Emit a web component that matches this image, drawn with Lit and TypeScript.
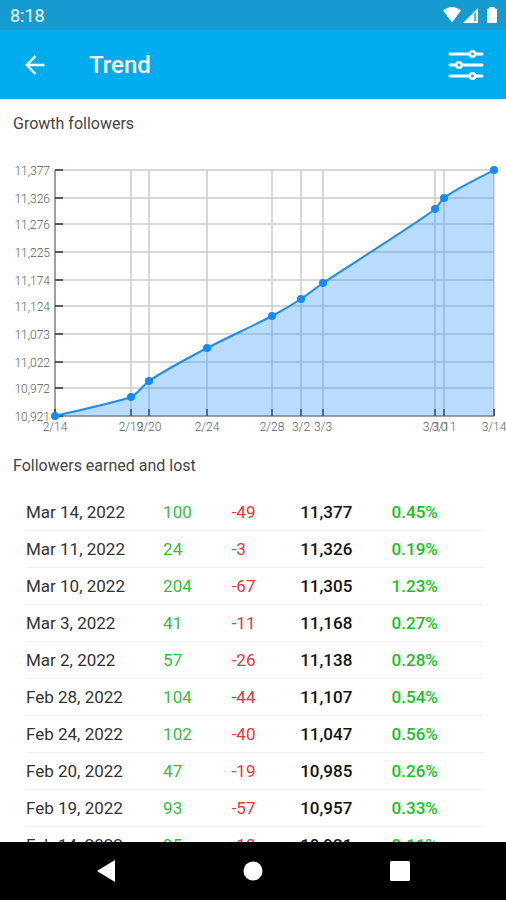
import { LitElement, html, svg, css } from "lit";
import { customElement } from "lit/decorators.js";
import { classMap } from "lit/directives/class-map.js";

interface Entry {
  date: string;
  earned: number;
  lost: number;
  total: number;
  rate: string;
}

const ENTRIES: Entry[] = [
  { date: "Mar 14, 2022", earned: 100, lost: -49, total: 11377, rate: "0.45%" },
  { date: "Mar 11, 2022", earned: 24, lost: -3, total: 11326, rate: "0.19%" },
  { date: "Mar 10, 2022", earned: 204, lost: -67, total: 11305, rate: "1.23%" },
  { date: "Mar 3, 2022", earned: 41, lost: -11, total: 11168, rate: "0.27%" },
  { date: "Mar 2, 2022", earned: 57, lost: -26, total: 11138, rate: "0.28%" },
  { date: "Feb 28, 2022", earned: 104, lost: -44, total: 11107, rate: "0.54%" },
  { date: "Feb 24, 2022", earned: 102, lost: -40, total: 11047, rate: "0.56%" },
  { date: "Feb 20, 2022", earned: 47, lost: -19, total: 10985, rate: "0.26%" },
  { date: "Feb 19, 2022", earned: 93, lost: -57, total: 10957, rate: "0.33%" },
  { date: "Feb 14, 2022", earned: 95, lost: -18, total: 10921, rate: "0.11%" },
];

const POINTS = [
  { label: "2/14", x: 55, value: 10921 },
  { label: "2/19", x: 131, value: 10957 },
  { label: "2/20", x: 149, value: 10985 },
  { label: "2/24", x: 207, value: 11047 },
  { label: "2/28", x: 272, value: 11107 },
  { label: "3/2", x: 301, value: 11138 },
  { label: "3/3", x: 323, value: 11168 },
  { label: "3/10", x: 435, value: 11305 },
  { label: "3/11", x: 444, value: 11326 },
  { label: "3/14", x: 494, value: 11377 },
];

const LEVELS = [11377, 11326, 11276, 11225, 11174, 11124, 11073, 11022, 10972, 10921];

const MIN = 10921;
const MAX = 11377;
const TOP = 20;
const BOTTOM = 266;
const LEFT = 55;
const RIGHT = 494;

const yOf = (value: number) => Math.round(TOP + ((MAX - value) / (MAX - MIN)) * (BOTTOM - TOP));
const group = (n: number) => n.toLocaleString("en-US");

/* Lightly smoothed monotone curve through the data points. */
function curve(points: { x: number; y: number }[]): string {
  const n = points.length;
  const slope = points.slice(1).map((p, i) => (p.y - points[i].y) / (p.x - points[i].x));
  const tangent = points.map((_, i) => {
    if (i === 0) return slope[0];
    if (i === n - 1) return slope[n - 2];
    const a = slope[i - 1];
    const b = slope[i];
    return a * b <= 0 ? 0 : (2 * a * b) / (a + b);
  });
  let d = `M${points[0].x} ${points[0].y}`;
  for (let i = 1; i < n; i++) {
    const p = points[i - 1];
    const q = points[i];
    const h = Math.min((q.x - p.x) / 3, 12);
    d += `C${p.x + h} ${p.y + tangent[i - 1] * h} ${q.x - h} ${q.y - tangent[i] * h} ${q.x} ${q.y}`;
  }
  return d;
}

@customElement("status-bar")
class StatusBar extends LitElement {
  static styles = css`
    :host {
      display: flex;
      align-items: center;
      justify-content: space-between;
      height: 30px;
      padding: 0 8px 0 10px;
      background: #169bd0;
      color: #f2fafd;
      font-size: 18px;
    }
    .icons {
      display: block;
    }
  `;

  render() {
    return html`
      <span>8:18</span>
      <svg class="icons" width="56" height="18" viewBox="0 0 56 18" fill="#fff" aria-hidden="true">
        <path d="M1 4.5Q5 1 10 1T19 4.5L10 16.5Z" />
        <path d="M36 2V17H21Z" />
        <path d="M32.2 7.5L34.2 5.5V15H32.2Z" fill="#169bd0" opacity=".8" />
        <path d="M45 3.5Q45 2.5 46 2.5H47.5V1H52.5V2.5H54Q55 2.5 55 3.5V16Q55 17 54 17H46Q45 17 45 16Z" />
      </svg>
    `;
  }
}

@customElement("growth-chart")
class GrowthChart extends LitElement {
  static styles = css`
    :host {
      display: block;
    }
    .plot {
      display: block;
      width: 100%;
      height: auto;
    }
    .grid {
      stroke: #cbcbcb;
      stroke-width: 1.5;
    }
    .axis {
      fill: none;
      stroke: #8c8c8c;
      stroke-width: 1.5;
    }
    .tick {
      stroke: #333;
      stroke-width: 1.5;
    }
    .area {
      fill: #1a8cff;
      fill-opacity: 0.3;
    }
    .line {
      fill: none;
      stroke: #1a8cf5;
      stroke-width: 2;
    }
    .dot {
      fill: #148aff;
    }
    .label {
      fill: #5c5c5c;
      font-size: 12px;
      font-weight: 300;
    }
    .value {
      text-anchor: end;
    }
    .day {
      text-anchor: middle;
    }
  `;

  render() {
    const pts = POINTS.map((p) => ({ x: p.x, y: yOf(p.value) }));
    const line = curve(pts);
    return html`
      <svg class="plot" viewBox="0 0 506 286" role="img" aria-label="Growth of followers">
        ${LEVELS.map((v) => svg`<line class="grid" x1=${LEFT} x2=${RIGHT} y1=${yOf(v)} y2=${yOf(v)} />`)}
        ${POINTS.map((p) => svg`<line class="grid" x1=${p.x} x2=${p.x} y1=${TOP} y2=${BOTTOM} />`)}
        <path class="axis" d="M${LEFT} ${TOP}V${BOTTOM}H${RIGHT}" />
        ${LEVELS.map((v) => svg`<line class="tick" x1=${LEFT} x2=${LEFT + 8} y1=${yOf(v)} y2=${yOf(v)} />`)}
        ${POINTS.map((p) => svg`<line class="tick" x1=${p.x} x2=${p.x} y1=${BOTTOM - 7} y2=${BOTTOM} />`)}
        <path class="area" d="${line}V${BOTTOM}H${LEFT}Z" />
        <path class="line" d=${line} />
        ${pts.map((p) => svg`<circle class="dot" cx=${p.x} cy=${p.y} r="4" />`)}
        ${LEVELS.map((v) => svg`<text class="label value" x="50" y=${yOf(v) + 5}>${group(v)}</text>`)}
        ${POINTS.map((p) => svg`<text class="label day" x=${p.x} y="281">${p.label}</text>`)}
      </svg>
    `;
  }
}

@customElement("followers-table")
class FollowersTable extends LitElement {
  static styles = css`
    :host {
      display: block;
      padding: 0 23px 0 26px;
    }
    .table {
      width: 100%;
      table-layout: fixed;
      border-collapse: collapse;
      font-size: 17px;
      line-height: 20px;
    }
    .wide {
      width: 30%;
    }
    .narrow {
      width: 15%;
    }
    .cell {
      height: 36px;
      padding: 0;
      border-bottom: 1px solid #f0f0f0;
      text-align: left;
      font-weight: 400;
      color: #333;
    }
    .gain {
      color: #2fbf3a;
    }
    .loss {
      color: #f0323c;
    }
    .strong {
      font-weight: 500;
      color: #111;
    }
    .rate {
      font-weight: 500;
      color: #14c41e;
    }
  `;

  private cell(text: string | number, kind: string) {
    return html`<td class=${classMap({ cell: true, [kind]: true })}>${text}</td>`;
  }

  render() {
    return html`
      <table class="table" aria-label="Followers earned and lost">
        <colgroup>
          <col class="wide" />
          <col class="narrow" />
          <col class="narrow" />
          <col />
          <col />
        </colgroup>
        <tbody>
          ${ENTRIES.map(
            (e) => html`<tr>
              <th class="cell" scope="row">${e.date}</th>
              ${this.cell(e.earned, "gain")} ${this.cell(e.lost, "loss")}
              ${this.cell(group(e.total), "strong")} ${this.cell(e.rate, "rate")}
            </tr>`
          )}
        </tbody>
      </table>
    `;
  }
}

@customElement("app-root")
class AppRoot extends LitElement {
  static styles = css`
    :host {
      display: flex;
      flex-direction: column;
      height: 100vh;
      background: #fff;
      font-family: Roboto, "Liberation Sans", sans-serif;
    }
    .button {
      display: flex;
      align-items: center;
      justify-content: center;
      padding: 0;
      border: 0;
      background: none;
      cursor: pointer;
    }
    .bar {
      display: flex;
      align-items: center;
      flex: none;
      height: 69px;
      padding: 0 16px;
      background: #00abee;
      color: #fff;
    }
    .action {
      width: 48px;
      height: 48px;
    }
    .back {
      width: 38px;
      height: 48px;
    }
    .title {
      flex: 1;
      margin: 0 0 0 35px;
      font-size: 24px;
      font-weight: 500;
      line-height: 32px;
    }
    .content {
      flex: 1;
      min-height: 0;
      overflow-y: auto;
      scrollbar-width: none;
    }
    .heading {
      margin: 0;
      padding: 13px 13px 14px;
      font-size: 16px;
      font-weight: 400;
      line-height: 24px;
      color: #444;
    }
    .spaced {
      padding-top: 18px;
      padding-bottom: 16px;
    }
    .nav {
      display: grid;
      grid-template-columns: repeat(3, 1fr);
      flex: none;
      height: 58px;
      padding: 0 32px;
      background: #000;
    }
  `;

  render() {
    return html`
      <status-bar></status-bar>
      <header class="bar">
        <button class="button back" aria-label="Back">
          <svg width="20" height="20" viewBox="0 0 20 20" fill="none" stroke="#fff" stroke-width="2.4">
            <path d="M19.5 10H2M10.5 1L1.8 10L10.5 19" />
          </svg>
        </button>
        <h1 class="title">Trend</h1>
        <button class="button action" aria-label="Filters">
          <svg width="36" height="30" viewBox="0 0 36 30" fill="none" stroke="#fff" stroke-width="3" stroke-linecap="round">
            <path d="M2 4H34M2 15H34M2 26H34" />
            <g fill="#00abee" stroke-width="2.5">
              <circle cx="24.5" cy="4" r="2.7" />
              <circle cx="11" cy="15" r="2.7" />
              <circle cx="24.5" cy="26" r="2.7" />
            </g>
          </svg>
        </button>
      </header>
      <main class="content">
        <h2 class="heading">Growth followers</h2>
        <growth-chart></growth-chart>
        <h2 class="heading spaced">Followers earned and lost</h2>
        <followers-table></followers-table>
      </main>
      <nav class="nav" aria-label="System">
        <button class="button" aria-label="Back">
          <svg width="20" height="22" viewBox="0 0 20 22" fill="#fff"><path d="M1 11L19 0V22Z" /></svg>
        </button>
        <button class="button" aria-label="Home">
          <svg width="20" height="20" viewBox="0 0 20 20" fill="#fff"><circle cx="10" cy="10" r="9.5" /></svg>
        </button>
        <button class="button" aria-label="Recent apps">
          <svg width="20" height="20" viewBox="0 0 20 20" fill="#fff"><rect width="20" height="20" rx="1.5" /></svg>
        </button>
      </nav>
    `;
  }
}
